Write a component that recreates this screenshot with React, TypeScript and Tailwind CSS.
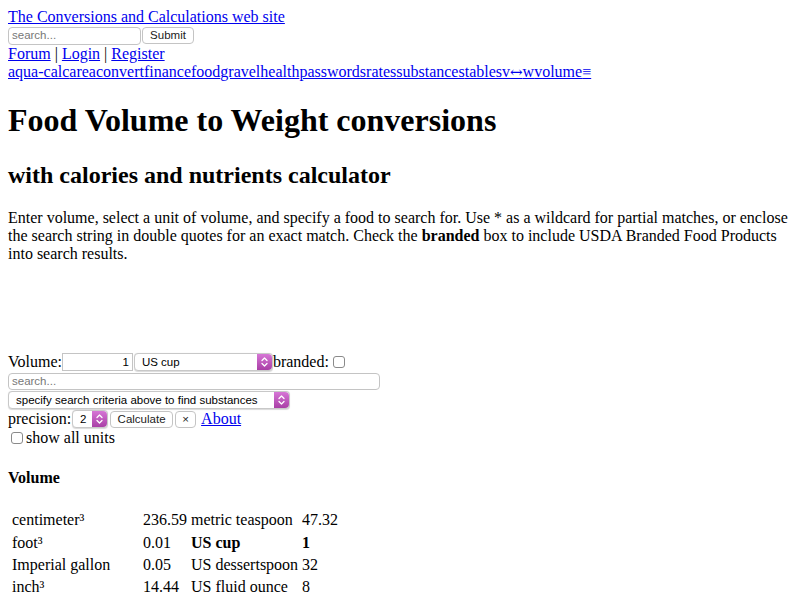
import React from "react";

const serif = { fontFamily: '"Liberation Serif", "Times New Roman", serif' };

function Stepper() {
  return (
    <div className="flex h-full w-[15px] items-center justify-center rounded-r-[4px] bg-gradient-to-b from-[#d676d6] to-[#a93fa6]">
      <svg width="7" height="10" viewBox="0 0 7 10" fill="none" stroke="white" strokeWidth="1.3" strokeLinecap="round" strokeLinejoin="round">
        <path d="M1 3.5 L3.5 1 L6 3.5" />
        <path d="M1 6.5 L3.5 9 L6 6.5" />
      </svg>
    </div>
  );
}

function Select({ w, label }: { w: string; label: string }) {
  return (
    <div className={`${w} flex h-[18px] items-stretch rounded-[4px] border border-[#c8c8c8] bg-white shadow-[0_0.5px_1px_rgba(0,0,0,0.15)]`}>
      <div className="flex flex-1 items-center pl-[7px] text-[11.5px] text-black" style={{ fontFamily: '"Liberation Sans", Arial, sans-serif' }}>
        {label}
      </div>
      <Stepper />
    </div>
  );
}

function Button({ w, label }: { w: string; label: string }) {
  return (
    <div className={`${w} flex h-[17px] items-center justify-center rounded-[4px] border border-[#c4c4c4] bg-white text-[11.5px] text-[#222]`} style={{ fontFamily: '"Liberation Sans", Arial, sans-serif' }}>
      {label}
    </div>
  );
}

function Checkbox() {
  return <div className="h-[12px] w-[12px] rounded-[3px] border border-[#8a8a8a] bg-white" />;
}

const A = ({ children }: { children: React.ReactNode }) => (
  <a href="#" className="text-[#0000ee] underline">{children}</a>
);

const rows: [string, string, string, string, boolean][] = [
  ["centimeter³", "236.59", "metric teaspoon", "47.32", false],
  ["foot³", "0.01", "US cup", "1", true],
  ["Imperial gallon", "0.05", "US dessertspoon", "32", false],
  ["inch³", "14.44", "US fluid ounce", "8", false],
];

export default function App() {
  const sans = { fontFamily: '"Liberation Sans", Arial, sans-serif' };
  return (
    <div className="min-h-[600px] bg-white p-2 text-[16px] leading-[1.15] text-black" style={serif}>
      <div className="h-[18px]"><A>The Conversions and Calculations web site</A></div>
      <div className="flex h-[19px] items-center">
        <div className="flex h-[18px] w-[133px] items-center rounded-[4px] border border-[#c4c4c4] pl-[3px] text-[11.5px] text-[#777]" style={sans}>search...</div>
        <div className="ml-[1px]"><Button w="w-[52px]" label="Submit" /></div>
      </div>
      <div className="h-[18px]"><A>Forum</A> | <A>Login</A> | <A>Register</A></div>
      <div className="h-[18px]">
        {["aqua-calc", "area", "convert", "finance", "food", "gravel", "health", "passwords", "rates", "substances", "tables"].map((t) => (
          <A key={t}>{t}</A>
        ))}
        <a href="#" className="text-[#0000ee] underline">v<span style={{ fontFamily: '"DejaVu Serif", serif' }} className="text-[15px]">↔</span>w</a>
        <A>volume</A>
        <A>≡</A>
      </div>
      <h1 className="my-[21.44px] text-[32px] font-bold leading-[37px]">Food Volume to Weight conversions</h1>
      <h2 className="my-[19.92px] text-[24px] font-bold leading-[28px]">with calories and nutrients calculator</h2>
      <p className="my-[16px] leading-[18px]">
        Enter volume, select a unit of volume, and specify a food to search for. Use * as a wildcard for partial matches, or enclose the search string in double quotes for an exact match. Check the <b>branded</b> box to include USDA Branded Food Products into search results.
      </p>
      <div className="h-[74px]" />
      <div className="flex h-[19px] items-center">
        <span>Volume:</span>
        <div className="flex h-[18px] w-[71px] items-center justify-end border border-[#c4c4c4] pr-[3px] text-[11.5px]" style={sans}>1</div>
        <div className="ml-[1px]"><Select w="w-[139px]" label="US cup" /></div>
        <span>branded:</span>
        <div className="ml-[4px]"><Checkbox /></div>
      </div>
      <div className="flex h-[19px] items-center">
        <div className="flex h-[17px] w-[372px] items-center rounded-[4px] border border-[#c4c4c4] pl-[3px] text-[11.5px] text-[#777]" style={sans}>search...</div>
      </div>
      <div className="flex h-[19px] items-center">
        <Select w="w-[282px]" label="specify search criteria above to find substances" />
      </div>
      <div className="flex h-[19px] items-center">
        <span>precision:</span>
        <div className="ml-[1px]"><Select w="w-[36px]" label="2" /></div>
        <div className="ml-[2px]"><Button w="w-[63px]" label="Calculate" /></div>
        <div className="ml-[2px]"><Button w="w-[21px]" label="×" /></div>
        <span className="ml-[5px]"><A>About</A></span>
      </div>
      <div className="flex h-[19px] items-center">
        <div className="ml-[3px] mr-[3px]"><Checkbox /></div>
        <span>show all units</span>
      </div>
      <p className="mb-[21px] mt-[21px] font-bold">Volume</p>
      <table className="border-separate border-spacing-[2px]">
        <tbody>
          {rows.map(([a, b, c, d, bold]) => (
            <tr key={a} className="h-[20px]">
              <td className="w-[130px] p-[1px] pl-[2px]">{a}</td>
              <td className="p-[1px]">{b}</td>
              <td className={`p-[1px] ${bold ? "font-bold" : ""}`}>{c}</td>
              <td className={`p-[1px] ${bold ? "font-bold" : ""}`}>{d}</td>
            </tr>
          ))}
        </tbody>
      </table>
    </div>
  );
}
